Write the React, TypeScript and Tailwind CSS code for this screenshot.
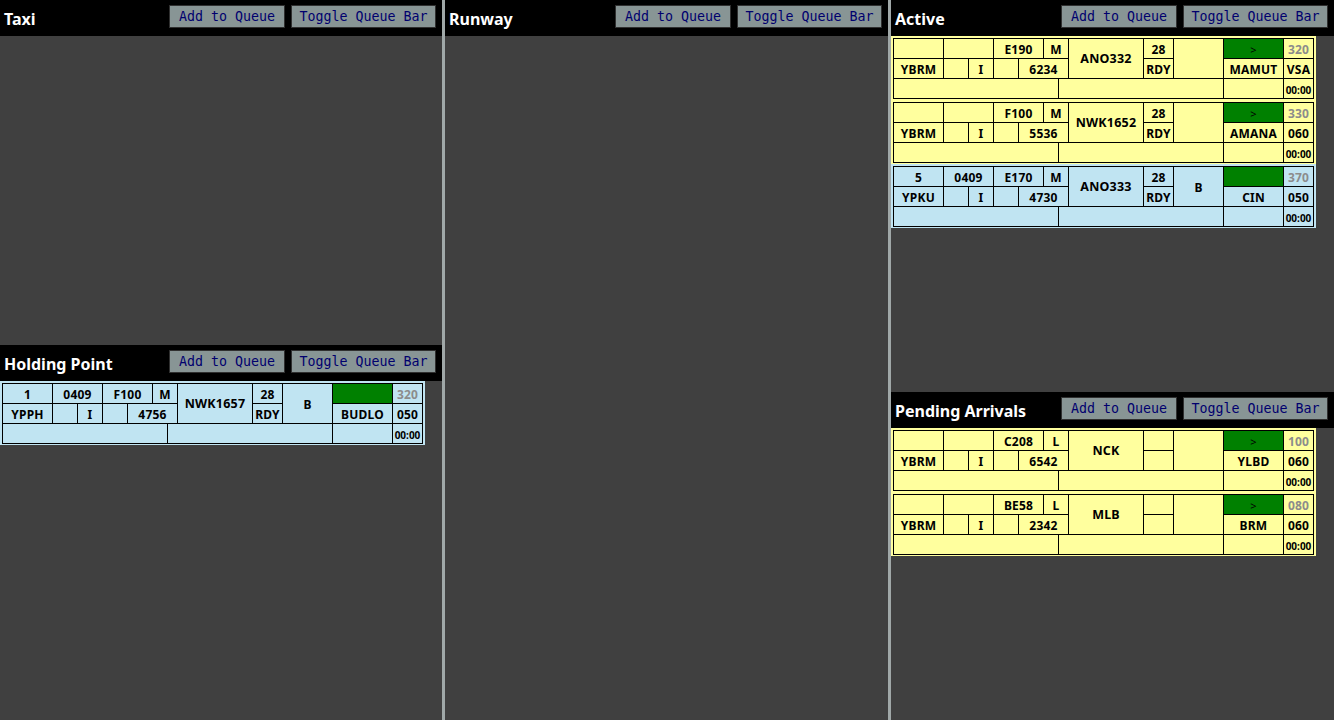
import React from 'react';

type Strip = {
  color: 'blue' | 'yellow';
  seq: string;
  sid: string;
  type: string;
  wtc: string;
  callsign: string;
  rwy: string;
  rdy: string;
  bay: string;
  arrow: boolean;
  cfl: string;
  dest: string;
  i: string;
  ssr: string;
  wp: string;
  rfl: string;
};

const holdStrips: Strip[] = [
  { color: 'blue', seq: '1', sid: '0409', type: 'F100', wtc: 'M', callsign: 'NWK1657', rwy: '28', rdy: 'RDY', bay: 'B', arrow: false, cfl: '320', dest: 'YPPH', i: 'I', ssr: '4756', wp: 'BUDLO', rfl: '050' },
];

const activeStrips: Strip[] = [
  { color: 'yellow', seq: '', sid: '', type: 'E190', wtc: 'M', callsign: 'ANO332', rwy: '28', rdy: 'RDY', bay: '', arrow: true, cfl: '320', dest: 'YBRM', i: 'I', ssr: '6234', wp: 'MAMUT', rfl: 'VSA' },
  { color: 'yellow', seq: '', sid: '', type: 'F100', wtc: 'M', callsign: 'NWK1652', rwy: '28', rdy: 'RDY', bay: '', arrow: true, cfl: '330', dest: 'YBRM', i: 'I', ssr: '5536', wp: 'AMANA', rfl: '060' },
  { color: 'blue', seq: '5', sid: '0409', type: 'E170', wtc: 'M', callsign: 'ANO333', rwy: '28', rdy: 'RDY', bay: 'B', arrow: false, cfl: '370', dest: 'YPKU', i: 'I', ssr: '4730', wp: 'CIN', rfl: '050' },
];

const pendingStrips: Strip[] = [
  { color: 'yellow', seq: '', sid: '', type: 'C208', wtc: 'L', callsign: 'NCK', rwy: '', rdy: '', bay: '', arrow: true, cfl: '100', dest: 'YBRM', i: 'I', ssr: '6542', wp: 'YLBD', rfl: '060' },
  { color: 'yellow', seq: '', sid: '', type: 'BE58', wtc: 'L', callsign: 'MLB', rwy: '', rdy: '', bay: '', arrow: true, cfl: '080', dest: 'YBRM', i: 'I', ssr: '2342', wp: 'BRM', rfl: '060' },
];

function StripCard({ s }: { s: Strip }) {
  const bg = s.color === 'blue' ? 'bg-[#c0e4f2]' : 'bg-[#ffff9e]';
  const cell = `${bg} flex items-center justify-center leading-none pt-[2px]`;
  return (
    <div className={`${bg} w-[425px] pt-[2px] pb-px px-[2px]`}>
      <div className="grid grid-cols-[49px_24px_24px_24px_24px_14px_9px_74px_29px_49px_59px_29px] grid-rows-[19px_19px_19px] gap-px bg-black p-px text-[12px] font-bold text-black tracking-[0.2px]">
        {/* ligne 1 */}
        <div className={`${cell} col-start-1 col-end-2 row-start-1`}>{s.seq}</div>
        <div className={`${cell} col-start-2 col-end-4 row-start-1`}>{s.sid}</div>
        <div className={`${cell} col-start-4 col-end-6 row-start-1`}>{s.type}</div>
        <div className={`${cell} col-start-6 col-end-8 row-start-1`}>{s.wtc}</div>
        <div className={`${cell} col-start-8 col-end-9 row-start-1 row-end-3 text-[12.5px]`}>{s.callsign}</div>
        <div className={`${cell} col-start-9 col-end-10 row-start-1`}>{s.rwy}</div>
        <div className={`${cell} col-start-10 col-end-11 row-start-1 row-end-3`}>{s.bay}</div>
        <div className="col-start-11 col-end-12 row-start-1 bg-[#008000] flex items-center justify-center pt-[2px] text-[11px] font-normal leading-none text-black">
          {s.arrow ? '>' : ''}
        </div>
        <div className={`${cell} col-start-12 col-end-13 row-start-1 text-[#8c8c8c]`}>{s.cfl}</div>
        {/* ligne 2 */}
        <div className={`${cell} col-start-1 col-end-2 row-start-2`}>{s.dest}</div>
        <div className={`${cell} col-start-2 col-end-3 row-start-2`} />
        <div className={`${cell} col-start-3 col-end-4 row-start-2`}>{s.i}</div>
        <div className={`${cell} col-start-4 col-end-5 row-start-2`} />
        <div className={`${cell} col-start-5 col-end-8 row-start-2`}>{s.ssr}</div>
        <div className={`${cell} col-start-9 col-end-10 row-start-2`}>{s.rdy}</div>
        <div className={`${cell} col-start-11 col-end-12 row-start-2`}>{s.wp}</div>
        <div className={`${cell} col-start-12 col-end-13 row-start-2`}>{s.rfl}</div>
        {/* ligne 3 */}
        <div className={`${cell} col-start-1 col-end-7 row-start-3`} />
        <div className={`${cell} col-start-7 col-end-11 row-start-3`} />
        <div className={`${cell} col-start-11 col-end-12 row-start-3`} />
        <div className={`${cell} col-start-12 col-end-13 row-start-3 text-[10px] tracking-normal`}>00:00</div>
      </div>
    </div>
  );
}

function Panel({ title, height, strips }: { title: string; height: string; strips: Strip[] }) {
  return (
    <div className={`${height} flex flex-col bg-[#404040]`}>
      <div className="h-[36px] shrink-0 bg-black flex items-start justify-between pr-[6px]">
        <div className="pl-[4px] pt-[11px] text-[16px] font-bold text-white leading-none">{title}</div>
        <div className="flex gap-[6px] pt-[5px]">
          <button className="h-[23px] w-[116px] bg-[#889595] border border-[#303030] text-[#00006e] text-[13.3px] leading-none font-['DejaVu_Sans_Mono','Liberation_Mono',monospace]">
            Add to Queue
          </button>
          <button className="h-[23px] w-[145px] bg-[#889595] border border-[#303030] text-[#00006e] text-[13.3px] leading-none font-['DejaVu_Sans_Mono','Liberation_Mono',monospace]">
            Toggle Queue Bar
          </button>
        </div>
      </div>
      <div className="flex-1 flex flex-col overflow-hidden">
        {strips.map((s) => (
          <StripCard key={s.callsign} s={s} />
        ))}
      </div>
    </div>
  );
}

export default function App() {
  return (
    <div className="w-[1334px] h-[720px] flex bg-[#a0a8a8] overflow-hidden font-['Noto_Sans','DejaVu_Sans',sans-serif]">
      <div className="w-[442px] flex flex-col">
        <Panel title="Taxi" height="h-[345px]" strips={[]} />
        <Panel title="Holding Point" height="h-[375px]" strips={holdStrips} />
      </div>
      <div className="w-[3px]" />
      <div className="w-[443px] flex flex-col">
        <Panel title="Runway" height="h-[720px]" strips={[]} />
      </div>
      <div className="w-[3px]" />
      <div className="w-[443px] flex flex-col">
        <Panel title="Active" height="h-[392px]" strips={activeStrips} />
        <Panel title="Pending Arrivals" height="h-[328px]" strips={pendingStrips} />
      </div>
    </div>
  );
}
